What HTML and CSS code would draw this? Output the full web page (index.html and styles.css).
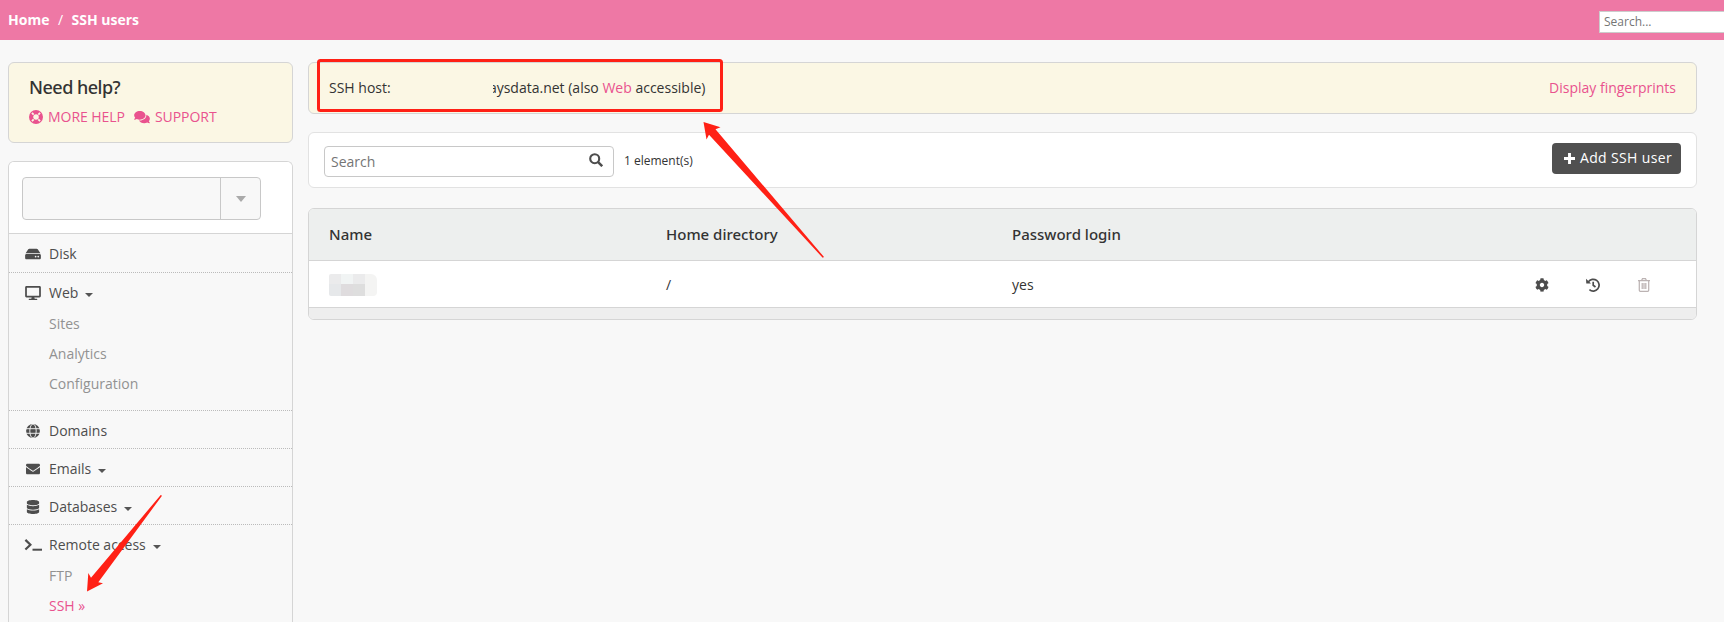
FILE: index.html
```html
<!DOCTYPE html>
<html lang="en">
<head>
<meta charset="utf-8">
<title>SSH users</title>
<link rel="stylesheet" href="styles.css">
</head>
<body>
<header class="topbar">
  <nav class="crumbs"><a>Home</a><span class="sep">/</span><a>SSH users</a></nav>
  <div class="global-search">Search...</div>
</header>
<div class="page">
  <aside class="sidebar">
    <section class="help">
      <h2>Need help?</h2>
      <div class="help-links">
        <svg class="i-ring" viewBox="0 0 14 14"><circle cx="7" cy="7" r="4.900" fill="none" stroke="currentColor" stroke-width="4.200"/><path d="m2.300 3.600 1.300-1.300 1.700 1.700L4 5.300zM10.400 2.300l1.300 1.300L10 5.300 8.700 4zM2.300 10.400 4 8.700 5.300 10l-1.700 1.700zM11.700 10.400l-1.300 1.300L8.700 10 10 8.700z" fill="#fbf7e4"/></svg>
        <a>MORE HELP</a>
        <svg class="i-comments" viewBox="0 0 576 512"><path fill="currentColor" d="M416 192c0-88.400-93.100-160-208-160S0 103.600 0 192c0 34.300 14.100 65.900 38 92-13.400 30.200-35.500 54.200-35.800 54.500-2.200 2.300-2.800 5.700-1.500 8.700S4.800 352 8 352c36.600 0 66.900-12.300 88.700-25 32.200 15.700 70.300 25 111.300 25 114.900 0 208-71.600 208-160zm122 220c23.900-26 38-57.700 38-92 0-66.900-53.500-124.200-129.300-148.100.9 6.600 1.300 13.300 1.300 20.100 0 105.900-107.700 192-240 192-10.800 0-21.300-.8-31.700-1.900C207.800 439.600 281.800 480 368 480c41 0 79.100-9.200 111.300-25 21.800 12.700 52.100 25 88.700 25 3.200 0 6.100-1.900 7.300-4.800 1.300-2.900.7-6.300-1.500-8.700-.3-.3-22.400-24.200-35.800-54.500z"/></svg>
        <a>SUPPORT</a>
      </div>
    </section>
    <section class="menu">
      <div class="account"><div class="select"><span class="select-value"></span><span class="select-toggle"><i></i></span></div></div>
      <div class="group first">
        <div class="item"><svg class="icon" viewBox="0 0 576 512"><path fill="currentColor" d="M576 304v96c0 26.500-21.500 48-48 48H48c-26.500 0-48-21.500-48-48v-96c0-26.500 21.500-48 48-48h480c26.500 0 48 21.500 48 48zm-48-80a79.600 79.600 0 0 1 30.800 6.200L462.200 85.400A48 48 0 0 0 422.300 64H153.700a48 48 0 0 0-39.900 21.400L17.200 230.200A79.600 79.600 0 0 1 48 224h480zm-48 96c-17.700 0-32 14.300-32 32s14.300 32 32 32 32-14.300 32-32-14.300-32-32-32zm-96 0c-17.700 0-32 14.300-32 32s14.300 32 32 32 32-14.300 32-32-14.300-32-32-32z"/></svg>Disk</div>
      </div>
      <div class="group open">
        <div class="item"><svg class="icon" viewBox="0 0 576 512"><path fill="currentColor" d="M528 0H48C21.500 0 0 21.500 0 48v320c0 26.500 21.500 48 48 48h192l-16 48h-72c-13.300 0-24 10.700-24 24s10.700 24 24 24h272c13.300 0 24-10.700 24-24s-10.700-24-24-24h-72l-16-48h192c26.500 0 48-21.500 48-48V48c0-26.500-21.500-48-48-48zm-16 352H64V64h448v288z"/></svg>Web<i class="caret"></i></div>
        <a class="sub">Sites</a><a class="sub">Analytics</a><a class="sub">Configuration</a>
      </div>
      <div class="group">
        <div class="item"><svg class="icon" viewBox="0 0 16 14"><circle cx="8" cy="7" r="6.900" fill="currentColor"/><g fill="none" stroke="#f8f8f8" stroke-width=".9"><ellipse cx="8" cy="7" rx="3.200" ry="7"/><path d="M1 4.700h14M1 9.300h14"/></g></svg>Domains</div>
      </div>
      <div class="group">
        <div class="item"><svg class="icon" viewBox="-32 0 576 512"><path fill="currentColor" d="M502.300 190.800c3.900-3.100 9.700-.2 9.700 4.700V400c0 26.500-21.500 48-48 48H48c-26.500 0-48-21.500-48-48V195.600c0-5 5.700-7.800 9.700-4.700 22.400 17.400 52.100 39.500 154.100 113.600 21.100 15.400 56.700 47.800 92.200 47.600 35.700.3 72-32.800 92.300-47.600 102-74.100 131.600-96.300 154-113.700zM256 320c23.200.4 56.600-29.200 73.400-41.400 132.700-96.300 142.800-104.700 173.400-128.700 5.800-4.500 9.200-11.500 9.200-18.900v-19c0-26.500-21.500-48-48-48H48c-26.500 0-48 21.500-48 48v19c0 7.400 3.400 14.300 9.200 18.900 30.600 23.900 40.700 32.400 173.400 128.700 16.800 12.200 50.200 41.800 73.400 41.400z"/></svg>Emails<i class="caret"></i></div>
      </div>
      <div class="group">
        <div class="item"><svg class="icon" viewBox="-64 0 576 512"><path fill="currentColor" d="M448 73.100v45.800C448 159.100 347.700 192 224 192S0 159.100 0 118.900V73.100C0 32.900 100.300 0 224 0s224 32.900 224 73.100zM448 176v102.900C448 319.100 347.700 352 224 352S0 319.100 0 278.900V176c48.100 33.100 136.200 48.600 224 48.600S399.900 209.100 448 176zm0 160v102.900C448 479.100 347.700 512 224 512S0 479.100 0 438.900V336c48.100 33.100 136.200 48.600 224 48.600S399.900 369.100 448 336z"/></svg>Databases<i class="caret"></i></div>
      </div>
      <div class="group last">
        <div class="item"><svg class="icon wide" viewBox="0 0 18 14"><path d="M1.400 1.900 6.400 6.700 1.400 11.500" fill="none" stroke="currentColor" stroke-width="2.200"/><path d="M8.500 10.700H18v2H8.500z" fill="currentColor"/></svg>Remote access<i class="caret"></i></div>
        <a class="sub">FTP</a><a class="sub active">SSH »</a>
      </div>
    </section>
  </aside>
  <main class="main">
    <section class="host">
      <p>SSH host:<span class="redacted"></span><span class="clip"><span>a</span></span>ysdata.net (also <a>Web</a> accessible)</p>
      <a>Display fingerprints</a>
    </section>
    <section class="tools">
      <div class="search">Search<svg viewBox="0 0 14 14"><circle cx="5.700" cy="5.700" r="4.500" fill="none" stroke="currentColor" stroke-width="2.100"/><path d="m8.900 8.900 4.300 4.300" stroke="currentColor" stroke-width="2.500"/></svg></div>
      <span class="count">1 element(s)</span>
      <button class="add"><svg viewBox="0 0 11 11"><path d="M5.500 0v11M0 5.500h11" stroke="currentColor" stroke-width="2.900"/></svg>Add SSH user</button>
    </section>
    <section class="table">
      <div class="row head"><span>Name</span><span>Home directory</span><span>Password login</span><span></span></div>
      <div class="row"><span><i class="mosaic"><b></b><b></b><b></b><b></b><b></b><b></b><b></b><b></b></i></span><span>/</span><span>yes</span>
        <span class="actions">
          <svg viewBox="0 0 512 512"><path fill="currentColor" d="M487.400 315.700l-42.600-24.600c4.300-23.200 4.300-47 0-70.200l42.600-24.600c4.900-2.800 7.100-8.600 5.500-14-11.100-35.600-30-67.800-54.700-94.600-3.800-4.100-10-5.100-14.800-2.300L380.800 110c-17.900-15.400-38.500-27.300-60.800-35.100V25.800c0-5.600-3.900-10.500-9.400-11.700-36.700-8.200-74.300-7.800-109.200 0-5.500 1.200-9.400 6.100-9.400 11.700V75c-22.200 7.900-42.800 19.800-60.800 35.100L88.700 85.500c-4.900-2.800-11-1.900-14.800 2.300-24.700 26.700-43.600 58.900-54.700 94.600-1.700 5.400.6 11.200 5.500 14L67.300 221c-4.300 23.200-4.300 47 0 70.200l-42.600 24.600c-4.900 2.800-7.100 8.600-5.500 14 11.100 35.600 30 67.800 54.700 94.600 3.800 4.100 10 5.100 14.800 2.300l42.600-24.600c17.900 15.400 38.500 27.300 60.800 35.100v49.200c0 5.600 3.900 10.500 9.400 11.700 36.700 8.200 74.300 7.800 109.200 0 5.500-1.200 9.400-6.100 9.400-11.700v-49.200c22.200-7.900 42.800-19.800 60.800-35.100l42.600 24.600c4.900 2.800 11 1.900 14.800-2.300 24.700-26.700 43.600-58.900 54.700-94.600 1.500-5.500-.7-11.300-5.600-14.100zM256 336c-44.100 0-80-35.900-80-80s35.900-80 80-80 80 35.900 80 80-35.900 80-80 80z"/></svg>
          <svg viewBox="0 0 14 14"><path d="M2.300 3.900A5.900 5.900 0 1 1 3.400 11.700M7.200 3.800v3.500l2.300 1.700" fill="none" stroke="currentColor" stroke-width="1.700"/><path fill="currentColor" d="M0 .7 5 5.400H.3z"/></svg>
          <svg class="muted" viewBox="0 0 14 14"><path d="M1 2.500h12M4.700 2.300l.8-1.600h3l.8 1.600M2.300 3v9.300q0 1 1 1h7.400q1 0 1-1V3M5.200 5v6M7 5v6M8.800 5v6" fill="none" stroke="currentColor" stroke-width="1.250"/></svg>
        </span></div>
      <div class="foot"></div>
    </section>
  </main>
</div>
<svg class="annotations" viewBox="0 0 1724 622">
  <rect x="318.500" y="60.500" width="403" height="50" rx="2" fill="none" stroke="#ff2015" stroke-width="3"/>
  <path fill="#ff2015" d="M703.500 122 720.500 127.300 715.500 129.300 824 257 822.700 257.800 709 134.700 706.500 139.500zM87 591.500 88.300 573 91 577.700 160.700 495 162 495.700 98.300 582.300 103 583.300z"/>
</svg>
</body>
</html>
```
FILE: styles.css
```css
* { box-sizing: border-box; }
body { margin: 0; height: 622px; overflow: hidden; background: #f8f8f8; color: #333; font: 14px/20px "Open Sans", sans-serif; position: relative; }
a { color: #e9528e; }
svg { display: block; flex: none; }

.topbar { height: 40px; background: #ee78a5; display: flex; justify-content: space-between; align-items: center; padding-left: 8px; overflow: hidden; }
.crumbs { display: flex; color: #fff; font-weight: 700; }
.crumbs a { color: #fff; }
.crumbs .sep { font-weight: 400; margin: 0 8.5px; }
.global-search { width: 125px; height: 22px; margin-top: 4px; border: 1px solid #ccc; border-right: 0; background: #fff; color: #757575; font-size: 12px; line-height: 20px; padding-left: 4px; }

.page { display: flex; gap: 15px; height: 582px; overflow: hidden; padding: 22px 27px 0 8px; }
.sidebar { width: 285px; flex: none; height: 560px; display: flex; flex-direction: column; }
.help { height: 81px; flex: none; border: 1px solid #d5d5d5; border-radius: 6px; background: #fbf7e4; padding: 13px 20px; }
.help h2 { margin: 0; font: 500 18px/22px "Noto Sans", sans-serif; letter-spacing: -.5px; }
.help-links { display: flex; align-items: center; margin-top: 9px; }
.help-links a { letter-spacing: -.05px; }
.i-ring { width: 14px; height: 14px; margin-right: 5px; color: #e9528e; }
.i-comments { width: 16px; height: 14px; margin: 0 5px 0 9px; color: #e9528e; }

.menu { flex: 1; min-height: 0; margin-top: 18px; border: 1px solid #d5d5d5; border-bottom: 0; border-radius: 6px 6px 0 0; overflow: hidden; }
.account { height: 72px; background: #fff; border-bottom: 1px solid #d5d5d5; padding: 15px 13px; }
.select { display: flex; width: 239px; height: 43px; border: 1px solid #c8c8c8; border-radius: 4px; background: #f8f8f8; }
.select-value { flex: 1; border-right: 1px solid #c8c8c8; }
.select-toggle { width: 39px; display: flex; align-items: center; justify-content: center; }
.select-toggle i { border: 5px solid transparent; border-top: 6px solid #aaa; border-bottom: 0; }
.group { border-bottom: 1px dotted #bbb; }
.group.last { border-bottom: 0; }
.item { height: 37px; padding: 2px 0 0 16px; display: flex; align-items: center; color: #4d4d4d; }
.group.first .item { height: 38px; }
.icon { width: 16px; height: 14px; margin-right: 8px; }
.icon.wide { width: 18px; margin: 0 7px 0 -1px; }
.caret { border: 4px solid transparent; border-top-color: #555; border-bottom: 0; margin: 4px 0 0 7px; }
.sub { display: block; height: 30px; line-height: 30px; padding-left: 40px; color: #929292; }
.item + .sub { height: 29px; line-height: 28px; }
.sub.active { color: #e9528e; }
.group.open { padding-bottom: 11px; }

.main { flex: 1; }
.host { height: 52px; border: 1px solid #d5d5d5; border-radius: 6px; background: #fbf7e4; padding: 0 20px; display: flex; align-items: center; justify-content: space-between; }
.host p { margin: 0; display: flex; white-space: pre; }
.redacted { width: 102px; }
.clip { width: 4px; overflow: hidden; display: flex; justify-content: flex-end; }
.tools { height: 56px; margin-top: 18px; border: 1px solid #e2e2e2; border-radius: 6px; background: #fff; padding: 0 15px; display: flex; align-items: center; }
.search { width: 290px; height: 31px; margin-top: 3px; border: 1px solid #c8c8c8; border-radius: 4px; padding: 1px 10px 0 6px; display: flex; align-items: center; justify-content: space-between; color: #757575; }
.search svg { width: 14px; height: 14px; color: #4d4d4d; margin-top: -4px; }
.count { font-size: 12px; margin: 2px 0 0 10px; }
.add { margin: -3px 0 0 auto; width: 129px; height: 31px; border: 0; border-radius: 4px; background: #505050; color: #fff; font: 14px/20px "Open Sans", sans-serif; letter-spacing: .35px; padding: 0 0 1px 12px; display: flex; align-items: center; white-space: nowrap; }
.add svg { width: 11px; height: 11px; margin-right: 5px; }
.table { margin-top: 20px; border: 1px solid #d5d5d5; border-radius: 6px; overflow: hidden; background: #fff; }
.row { display: grid; grid-template-columns: 337px 346px 1fr 156px; align-items: center; height: 47px; padding: 2px 20px 0; border-bottom: 1px solid #d5d5d5; }
.row.head { height: 52px; background: #edefee; font: 500 15px/20px "Noto Sans", sans-serif; padding: 0 20px 2px; }
.foot { height: 11px; background: #eee; }
.mosaic { display: grid; width: 48px; height: 22px; grid-template: 10px 12px / repeat(4, 12px); border-radius: 2px 6px 4px 2px; overflow: hidden; }
.mosaic b { background: #ebebec; }
.mosaic b:nth-child(2) { background: #f1f4f4; }
.mosaic b:nth-child(4), .mosaic b:nth-child(8) { background: #f4f4f3; }
.mosaic b:nth-child(5) { background: #e6e8ea; }
.mosaic b:nth-child(6) { background: #dfdcde; }
.mosaic b:nth-child(7) { background: #dedede; }
.actions { display: flex; gap: 37px; color: #4d4d4d; padding-left: 14.5px; }
.actions svg { width: 14px; height: 14px; }
.actions .muted { color: #bcb3b3; }
.annotations { position: absolute; left: 0; top: 0; width: 1724px; height: 622px; pointer-events: none; }
```
